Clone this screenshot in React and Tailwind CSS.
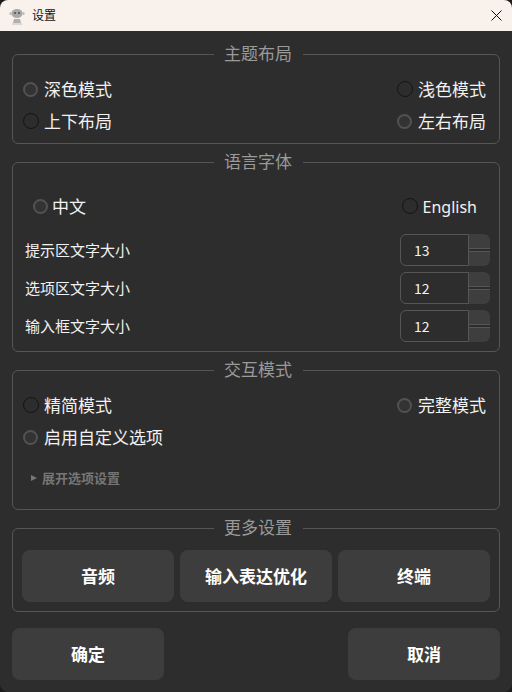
const font = { fontFamily: '"Noto Sans CJK SC", "Noto Sans", sans-serif' }

function Radio({ label, active, tight, textClass = "text-[17px]" }) {
  return (
    <div className={`flex items-center h-5 ${tight ? "gap-[3px]" : "gap-[5px]"}`}>
      <span
        className={`rounded-full shrink-0 ${
          active
            ? "w-[15px] h-[15px] mr-px border-2 border-[#525252] bg-[#333333]"
            : "w-[16px] h-[16px] border border-[#141414] bg-[#2d2d2d]"
        }`}
      />
      <span className={`${textClass} leading-5 text-[#f2f2f2]`}>{label}</span>
    </div>
  )
}

function Group({ title, className, children }) {
  return (
    <fieldset className={`border border-[#565656] rounded-md min-w-0 ${className}`}>
      <legend className="ml-[201px] pl-[10px] pr-[11px] h-5 text-[17px] leading-[18px] text-[#9a9a9a]">{title}</legend>
      {children}
    </fieldset>
  )
}

function SpinRow({ label, value }) {
  return (
    <div className="flex items-center justify-between h-8 pl-3 pr-[9px]">
      <span className="text-[15px] text-[#f2f2f2]">{label}</span>
      <div className="flex w-[90px] h-8">
        <div className="w-[69px] h-8 border border-[#565656] rounded-l-md pl-[13px] text-[14px] leading-[30px] text-[#f2f2f2]">
          {value}
        </div>
        <div className="flex-1 flex flex-col justify-between">
          <div className="h-[15px] bg-[#3e3e3e] rounded-tr-md border-b border-[#565656]" />
          <div className="h-[15px] bg-[#3e3e3e] rounded-br-md border-t border-[#565656]" />
        </div>
      </div>
    </div>
  )
}

function Btn({ children, className = "" }) {
  return (
    <button className={`h-[52px] bg-[#3d3d3d] rounded-lg text-[17px] font-bold text-white ${className}`}>
      {children}
    </button>
  )
}

export default function App() {
  return (
    <div style={font} className="w-[512px] h-[692px] bg-[#1b1b1b] overflow-hidden">
      <div className="h-full bg-[#2d2d2d] rounded-lg overflow-hidden">
        {/* Title bar */}
        <div className="h-[31px] bg-[#f9f1ec] flex items-center pl-[9px] pr-[10px]">
          <svg width="16" height="18" viewBox="0 0 16 18" className="shrink-0">
            <ellipse cx="8" cy="6.5" rx="5.5" ry="4.5" fill="#a8a8a8" />
            <circle cx="1.8" cy="6.5" r="1.5" fill="#c0c0c0" />
            <circle cx="14.2" cy="6.5" r="1.5" fill="#c0c0c0" />
            <circle cx="6" cy="6" r="1.1" fill="#555" />
            <circle cx="10" cy="6" r="1.1" fill="#555" />
            <path d="M5 12h6l1 4H4z" fill="#b0b0b0" />
            <path d="M3 17h10" stroke="#cfcfcf" strokeWidth="1.5" />
          </svg>
          <span className="ml-[7px] -mt-[2px] text-[12px] text-[#111]">设置</span>
          <svg width="11" height="11" viewBox="0 0 11 11" className="ml-auto">
            <path d="M.5.5l10 10M10.5.5l-10 10" stroke="#111" strokeWidth="1" fill="none" />
          </svg>
        </div>

        <div className="px-3 pt-[13px] flex flex-col">
          <Group title="主题布局" className="h-[100px]">
            <div className="flex justify-between pl-[10px] pr-[13px] pt-[15px]">
              <Radio label="深色模式" active />
              <Radio label="浅色模式" />
            </div>
            <div className="flex justify-between pl-[10px] pr-[13px] pt-3">
              <Radio label="上下布局" />
              <Radio label="左右布局" active />
            </div>
          </Group>

          <Group title="语言字体" className="h-[200px] mt-2">
            <div className="flex justify-between pl-5 pr-[22px] pt-6">
              <Radio label="中文" active tight />
              <Radio label="English" textClass="text-[16px] pt-px font-['Noto_Sans']" />
            </div>
            <div className="flex flex-col gap-[6px] pt-[18px]">
              <SpinRow label="提示区文字大小" value="13" />
              <SpinRow label="选项区文字大小" value="12" />
              <SpinRow label="输入框文字大小" value="12" />
            </div>
          </Group>

          <Group title="交互模式" className="h-[150px] mt-2">
            <div className="flex justify-between pl-[10px] pr-[13px] pt-[15px]">
              <Radio label="精简模式" />
              <Radio label="完整模式" active />
            </div>
            <div className="pl-[10px] pt-3">
              <Radio label="启用自定义选项" active />
            </div>
            <div className="flex items-center gap-[5px] pl-[18px] pt-[21px] text-[13px] font-bold text-[#767676]">
              <span className="w-0 h-0 border-y-[3.5px] border-y-transparent border-l-[6px] border-l-[#767676]" />
              展开选项设置
            </div>
          </Group>

          <Group title="更多设置" className="h-[94px] mt-2">
            <div className="grid grid-cols-3 gap-[6px] px-[9px] pt-3">
              <Btn>音频</Btn>
              <Btn>输入表达优化</Btn>
              <Btn>终端</Btn>
            </div>
          </Group>

          <div className="flex justify-between mt-4">
            <Btn className="w-[152px]">确定</Btn>
            <Btn className="w-[152px]">取消</Btn>
          </div>
        </div>
      </div>
    </div>
  )
}
